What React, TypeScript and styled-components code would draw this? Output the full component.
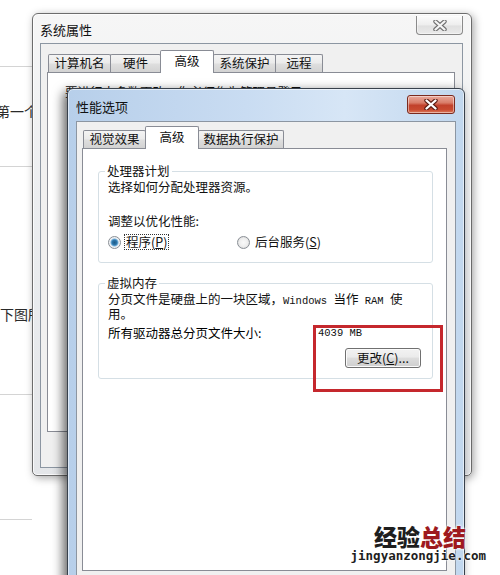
import React from "react";
import styled, { createGlobalStyle } from "styled-components";

const UI = `"Noto Sans CJK SC", "Noto Sans", sans-serif`;
const MONO = `"Liberation Mono", "DejaVu Sans Mono", monospace`;

const Global = createGlobalStyle`
  html, body { margin: 0; padding: 0; background: #fff; }
  body { font-family: ${UI}; color: #000; }
`;

const Desktop = styled.div`
  position: relative;
  width: 500px;
  height: 575px;
  overflow: hidden;
  background: #fff;
  font-size: 12.5px;
`;

/* ---------- web page behind the dialogs ---------- */
const PageColumn = styled.div`
  width: 32px;
  display: flex;
  flex-direction: column;
  overflow: hidden;
`;

const PageRow = styled.div<{ $h: number; $pt?: number }>`
  height: ${(p) => p.$h}px;
  padding-top: ${(p) => p.$pt ?? 0}px;
  box-sizing: border-box;
  border-bottom: 1px solid #d4d4d4;
  white-space: nowrap;
`;

const PageText = styled.div<{ $indent?: number }>`
  font-size: 14px;
  line-height: 18px;
  color: #2a2a2a;
  margin-left: ${(p) => p.$indent ?? 0}px;
`;

/* ---------- windows ---------- */
const Window = styled.div<{ $active?: boolean }>`
  position: absolute;
  box-sizing: border-box;
  display: flex;
  flex-direction: column;
  border: 1px solid ${(p) => (p.$active ? "#38414c" : "#6c6c6c")};
  border-radius: 6px 6px 5px 5px;
  padding: 0 8px 7px 7px;
  background: ${(p) =>
    p.$active
      ? "linear-gradient(90deg, #b7cfea 0%, #c9dcf2 45%, #d7e6f6 70%, #c1d7ee 100%)"
      : "linear-gradient(180deg, #f6f6f6 0%, #eceef0 40%, #e4e6e9 100%)"};
  box-shadow: ${(p) =>
    p.$active
      ? "-4px 3px 11px rgba(0,0,0,0.6), inset 0 0 0 1px rgba(255,255,255,0.55)"
      : "2px 2px 9px rgba(0,0,0,0.35), inset 0 0 0 1px rgba(255,255,255,0.8)"};
`;

const OuterWin = styled(Window)`
  left: 32px;
  top: 13px;
  width: 440px;
  height: 463px;
`;

const InnerWin = styled(Window)`
  left: 67px;
  top: 88px;
  width: 398px;
  height: 530px;
  padding: 0 8px 8px 8px;
`;

const TitleBar = styled.div<{ $h: number; $pt: number }>`
  height: ${(p) => p.$h}px;
  padding-top: ${(p) => p.$pt}px;
  box-sizing: border-box;
  display: flex;
  justify-content: space-between;
  align-items: center;
  flex-shrink: 0;
`;

const Title = styled.span`
  font-size: 13px;
  line-height: 16px;
  color: #111;
`;

const CloseButton = styled.div<{ $red?: boolean; $top: number; $right: number }>`
  align-self: flex-start;
  margin-top: ${(p) => p.$top}px;
  margin-right: ${(p) => p.$right}px;
  width: ${(p) => (p.$red ? 48 : 47)}px;
  height: 19px;
  box-sizing: border-box;
  display: flex;
  align-items: center;
  justify-content: center;
  border: 1px solid ${(p) => (p.$red ? "#7b2a1e" : "#8a8a8a")};
  border-radius: ${(p) => (p.$red ? "3px" : "0 0 4px 4px")};
  ${(p) => (p.$red ? "" : "border-top: none;")}
  background: ${(p) =>
    p.$red
      ? "linear-gradient(180deg, #e9a99b 0%, #d97c68 40%, #c2412b 55%, #c84a30 80%, #dd7a5c 100%)"
      : "linear-gradient(180deg, #fbfbfb 0%, #eeeeee 50%, #e0e0e0 55%, #eaeaea 100%)"};
  box-shadow: inset 0 0 0 1px rgba(255, 255, 255, 0.45);
`;

const CloseGlyph: React.FC<{ red?: boolean }> = ({ red }) => (
  <svg width="14" height="11" viewBox="0 0 14 11">
    <path
      d="M2.5 1.5 L11.5 9.5 M11.5 1.5 L2.5 9.5"
      stroke={red ? "#5a1c12" : "#6e6e6e"}
      strokeWidth="4.4"
      strokeLinecap="round"
      fill="none"
    />
    <path
      d="M2.5 1.5 L11.5 9.5 M11.5 1.5 L2.5 9.5"
      stroke={red ? "#ffffff" : "#f4f4f4"}
      strokeWidth="2.3"
      strokeLinecap="round"
      fill="none"
    />
  </svg>
);

const Client = styled.div<{ $pl: number; $pr: number }>`
  flex: 1;
  display: flex;
  flex-direction: column;
  background: #f0f0f0;
  border: 1px solid #8c96a2;
  padding: 0 ${(p) => p.$pr}px 0 ${(p) => p.$pl}px;
  overflow: hidden;
`;

const TabStrip = styled.div<{ $h: number }>`
  display: flex;
  align-items: flex-end;
  height: ${(p) => p.$h}px;
  padding-left: 2px;
  flex-shrink: 0;
  position: relative;
  z-index: 1;
`;

const Tab = styled.div<{ $w: number; $sel?: boolean }>`
  box-sizing: border-box;
  width: ${(p) => p.$w}px;
  height: ${(p) => (p.$sel ? 23 : 18)}px;
  margin-bottom: ${(p) => (p.$sel ? -1 : 0)}px;
  margin-left: -1px;
  border: 1px solid #898c95;
  border-bottom: none;
  border-radius: 2px 2px 0 0;
  background: ${(p) =>
    p.$sel ? "#ffffff" : "linear-gradient(180deg, #f4f4f4 0%, #ebebeb 45%, #dedede 55%, #d2d2d2 100%)"};
  font-size: 12.5px;
  line-height: 16px;
  padding-top: ${(p) => (p.$sel ? 2 : 0)}px;
  text-align: center;
  color: #111;
  position: relative;
  z-index: ${(p) => (p.$sel ? 2 : 1)};
`;

const TabPanel = styled.div<{ $h: number; $p: string }>`
  height: ${(p) => p.$h}px;
  box-sizing: border-box;
  flex-shrink: 0;
  background: #fff;
  border: 1px solid #898c95;
  padding: ${(p) => p.$p};
  display: flex;
  flex-direction: column;
`;

const Notice = styled.div`
  font-size: 12.5px;
  line-height: 16px;
  white-space: nowrap;
  color: #111;
`;

/* ---------- group boxes ---------- */
const GroupBox = styled.fieldset<{ $mt?: number; $pb: number }>`
  margin: ${(p) => p.$mt ?? 0}px 0 0 0;
  padding: 0 9px ${(p) => p.$pb}px 9px;
  border: 1px solid #d5dfe5;
  border-radius: 3px;
  min-width: 0;
`;

const Legend = styled.legend`
  font-size: 12.5px;
  line-height: 16px;
  padding: 0 2px;
  margin-left: -3px;
  color: #111;
`;

const Line = styled.div<{ $mt?: number; $lh?: number }>`
  margin-top: ${(p) => p.$mt ?? 0}px;
  height: ${(p) => p.$lh ?? 16}px;
  font-size: 12.5px;
  line-height: ${(p) => p.$lh ?? 16}px;
  white-space: nowrap;
  color: #111;
`;

const Mono = styled.span`
  font-family: ${MONO};
  font-size: 10.5px;
  white-space: pre;
`;

const RadioRow = styled.div`
  margin-top: 5px;
  height: 16px;
  display: flex;
  align-items: center;
`;

const RadioOption = styled.label<{ $w?: number }>`
  display: flex;
  align-items: center;
  gap: 3px;
  width: ${(p) => (p.$w ? `${p.$w}px` : "auto")};
  font-size: 12.5px;
  line-height: 14px;
  color: #111;
`;

const RadioDot = styled.span<{ $on?: boolean }>`
  width: 13px;
  height: 13px;
  flex-shrink: 0;
  box-sizing: border-box;
  border-radius: 50%;
  border: 1px solid #8a8f96;
  background: ${(p) =>
    p.$on
      ? "radial-gradient(circle, #1f5a86 0px, #2d78ad 2.5px, #7fb6de 3.6px, #e9edf1 4.4px, #f7f7f7 6px)"
      : "radial-gradient(circle, #f9f9f9 0px, #eeeeee 4px, #dcdcdc 6px)"};
`;

const FocusLabel = styled.span<{ $focus?: boolean }>`
  padding: 0 1px;
  border: 1px dotted ${(p) => (p.$focus ? "#333" : "transparent")};
`;

const ValueRow = styled.div`
  margin-top: 4px;
  display: flex;
  align-items: center;
  height: 16px;
`;

const ValueLabel = styled.span`
  width: 210px;
  font-size: 12.5px;
  line-height: 16px;
  white-space: nowrap;
`;

const ValueText = styled.span`
  font-family: ${MONO};
  font-size: 10.5px;
  color: #111;
`;

const ButtonRow = styled.div`
  margin-top: 7px;
  display: flex;
  justify-content: flex-end;
  padding-right: 2px;
`;

const PushButton = styled.button`
  width: 76px;
  height: 20px;
  padding: 0;
  font-family: ${UI};
  font-size: 12.5px;
  line-height: 16px;
  color: #111;
  border: 1px solid #707070;
  border-radius: 3px;
  background: linear-gradient(180deg, #f2f2f2 0%, #ebebeb 45%, #dddddd 50%, #cfcfcf 100%);
  box-shadow: inset 0 0 0 1px #fbfbfb;
`;

/* ---------- overlays ---------- */
const Annotation = styled.div`
  position: absolute;
  left: 313px;
  top: 325px;
  width: 130px;
  height: 67px;
  box-sizing: border-box;
  border: 3px solid #c5282d;
`;

const Watermark = styled.div`
  position: absolute;
  right: 14px;
  bottom: 12px;
  display: flex;
  flex-direction: column;
  align-items: flex-end;
`;

const MarkTitle = styled.div`
  margin-right: 20px;
  font-family: ${UI};
  font-size: 23px;
  line-height: 25px;
  font-weight: 900;
  color: #1e1e1e;
  text-shadow: 0 0 3px #fff, 0 0 3px #fff;
`;

const MarkAccent = styled.span`
  color: #9e1a1e;
`;

const MarkUrl = styled.div`
  font-family: "DejaVu Sans Mono", monospace;
  font-size: 12.5px;
  line-height: 14px;
  font-weight: bold;
  color: #1e1e1e;
  text-shadow: 0 0 2px #fff, 0 0 2px #fff;
`;

export default function App() {
  return (
    <>
      <Global />
      <Desktop>
        <PageColumn>
          <PageRow $h={67} />
          <PageRow $h={100} $pt={35}>
            <PageText $indent={-4}>第一个</PageText>
          </PageRow>
          <PageRow $h={228} $pt={138}>
            <PageText>下图所</PageText>
          </PageRow>
          <PageRow $h={125} />
        </PageColumn>

        <OuterWin>
          <TitleBar $h={29} $pt={2}>
            <Title>系统属性</Title>
            <CloseButton $top={0} $right={0}>
              <CloseGlyph />
            </CloseButton>
          </TitleBar>
          <Client $pl={6} $pr={7}>
            <TabStrip $h={28}>
              <Tab $w={63}>计算机名</Tab>
              <Tab $w={51}>硬件</Tab>
              <Tab $w={54} $sel>
                高级
              </Tab>
              <Tab $w={63}>系统保护</Tab>
              <Tab $w={48}>远程</Tab>
            </TabStrip>
            <TabPanel $h={360} $p="11px 0 0 17px">
              <Notice>要进行大多数更改，你必须作为管理员登录。</Notice>
            </TabPanel>
          </Client>
        </OuterWin>

        <InnerWin $active>
          <TitleBar $h={32} $pt={4}>
            <Title>性能选项</Title>
            <CloseButton $red $top={2} $right={1}>
              <CloseGlyph red />
            </CloseButton>
          </TitleBar>
          <Client $pl={5} $pr={8}>
            <TabStrip $h={26}>
              <Tab $w={63}>视觉效果</Tab>
              <Tab $w={54} $sel>
                高级
              </Tab>
              <Tab $w={86}>数据执行保护</Tab>
            </TabStrip>
            <TabPanel $h={423} $p="14px 13px 0 15px">
              <GroupBox $pb={12}>
                <Legend>处理器计划</Legend>
                <Line>选择如何分配处理器资源。</Line>
                <Line $mt={18}>调整以优化性能:</Line>
                <RadioRow>
                  <RadioOption $w={129}>
                    <RadioDot $on />
                    <FocusLabel $focus>
                      程序(<u>P</u>)
                    </FocusLabel>
                  </RadioOption>
                  <RadioOption>
                    <RadioDot />
                    <FocusLabel>
                      后台服务(<u>S</u>)
                    </FocusLabel>
                  </RadioOption>
                </RadioRow>
              </GroupBox>

              <GroupBox $mt={12} $pb={10}>
                <Legend>虚拟内存</Legend>
                <Line $lh={15}>
                  分页文件是硬盘上的一块区域，<Mono>Windows </Mono>当作<Mono> RAM </Mono>使
                </Line>
                <Line $lh={15}>用。</Line>
                <ValueRow>
                  <ValueLabel>所有驱动器总分页文件大小:</ValueLabel>
                  <ValueText>4039 MB</ValueText>
                </ValueRow>
                <ButtonRow>
                  <PushButton>
                    更改(<u>C</u>)...
                  </PushButton>
                </ButtonRow>
              </GroupBox>
            </TabPanel>
          </Client>
        </InnerWin>

        <Annotation />

        <Watermark>
          <MarkTitle>
            经验<MarkAccent>总结</MarkAccent>
          </MarkTitle>
          <MarkUrl>jingyanzongjie.com</MarkUrl>
        </Watermark>
      </Desktop>
    </>
  );
}
